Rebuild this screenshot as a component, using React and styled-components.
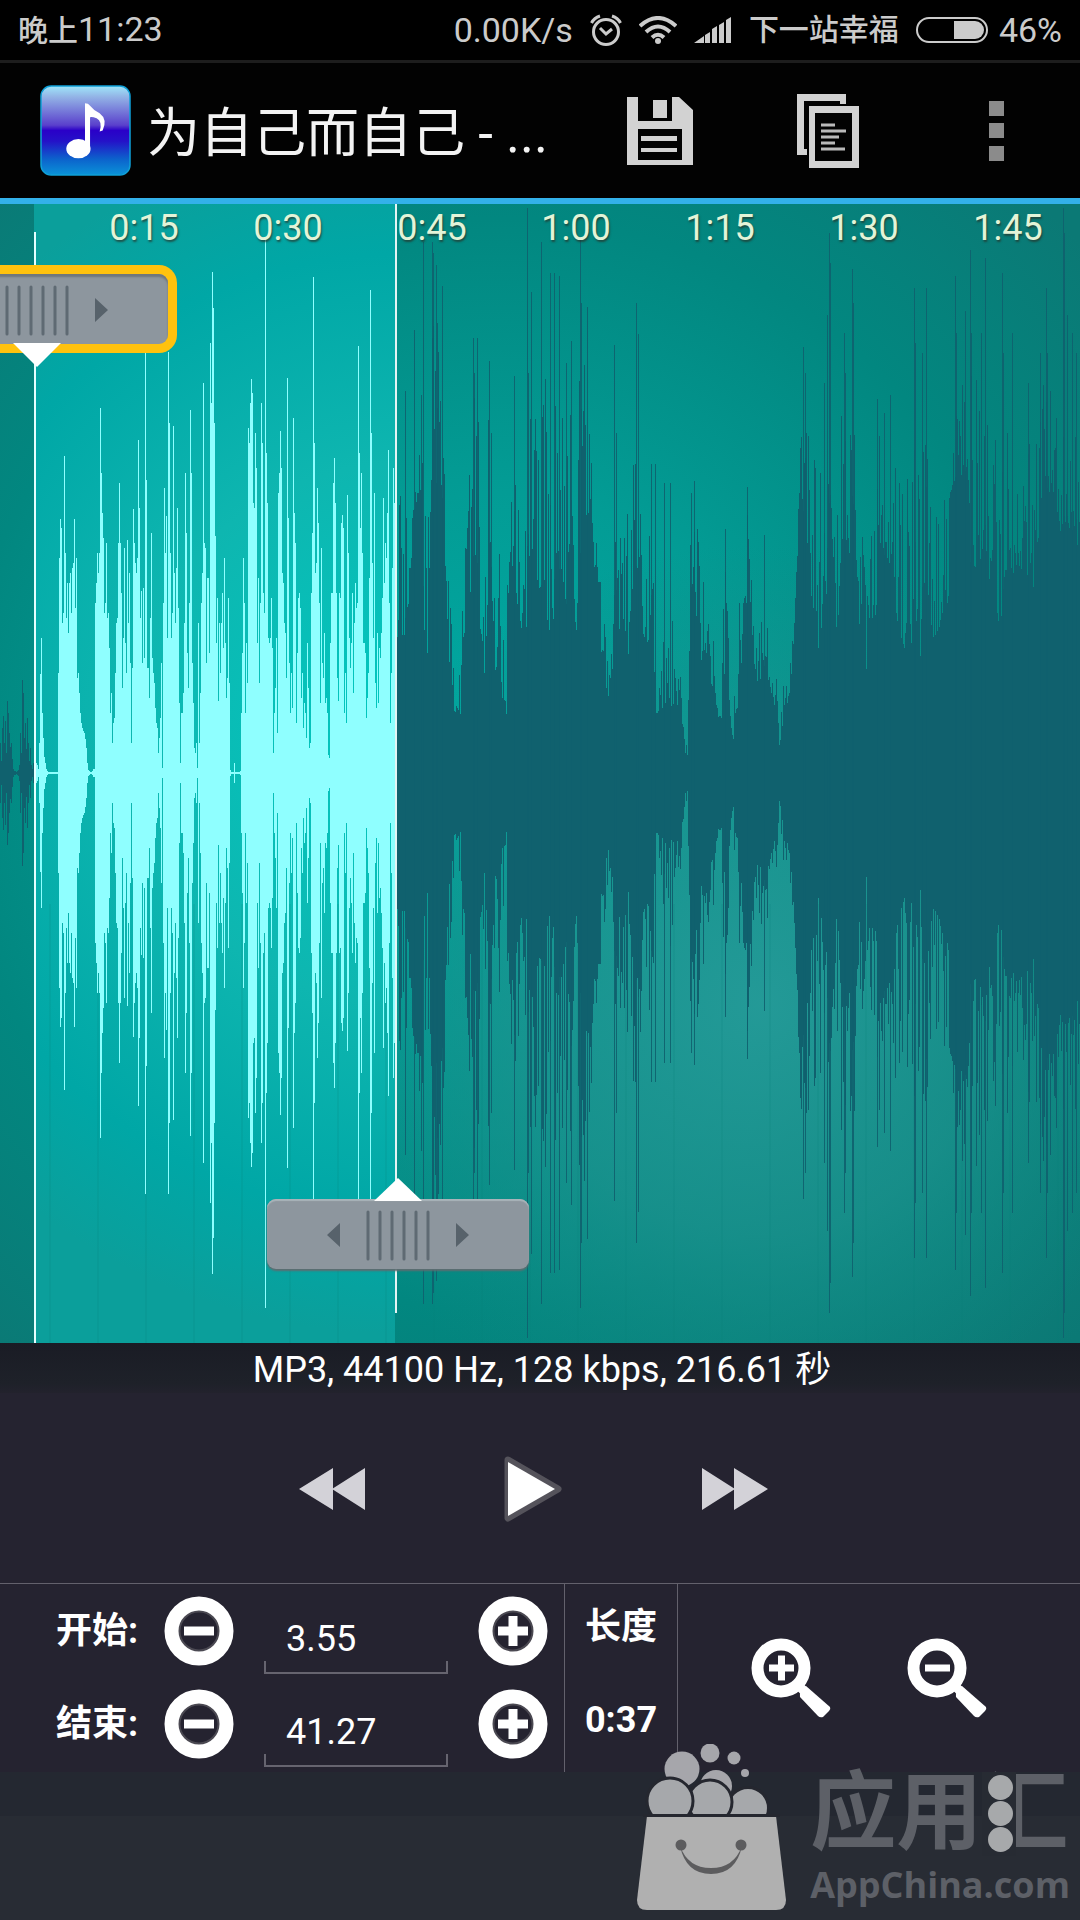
import React, { useState } from "react";
import styled, { createGlobalStyle } from "styled-components";

const GlobalStyle = createGlobalStyle`
  *, *::before, *::after { box-sizing: border-box; }
  body {
    margin: 0;
    background: #282c33;
    color: #fff;
    font-family: Roboto, "Noto Sans CJK SC", sans-serif;
  }
`;

const Screen = styled.div`
  position: relative;
  display: flex;
  flex-direction: column;
  min-height: 100vh;
  overflow: hidden;
`;

/* ---------- Status bar ---------- */

const StatusBar = styled.div`
  display: flex;
  align-items: center;
  justify-content: space-between;
  height: 63px;
  padding: 0 18px;
  background: #000;
  border-bottom: 3px solid #1d1d1d;
  color: #cbcbcb;
  font-size: 34px;
  line-height: 40px;
  white-space: nowrap;
`;

const StatusGroup = styled.div`
  display: flex;
  align-items: center;
  gap: ${(p) => p.$gap}px;
`;

const StatusCjk = styled.span`
  font-size: 30px;
  font-weight: 500;
`;

/* ---------- Title bar ---------- */

const TitleBar = styled.header`
  display: flex;
  align-items: center;
  height: 141px;
  padding: 0 43px 0 40px;
  background: #020202;
  border-bottom: 6px solid #33b1ea;
`;

const Title = styled.h1`
  flex: 1;
  margin: 0 0 0 16px;
  padding-top: 6px;
  font-size: 53px;
  line-height: 64px;
  font-weight: 400;
  color: #f3f3f3;
  white-space: nowrap;
`;

const TitleActions = styled.div`
  display: flex;
  align-items: center;
  gap: 86px;
`;

const IconButton = styled.button`
  display: flex;
  align-items: center;
  justify-content: center;
  flex: none;
  width: ${(p) => p.$size}px;
  height: ${(p) => p.$size}px;
  padding: 0;
  border: 0;
  background: none;
  cursor: pointer;
`;

/* ---------- Waveform ---------- */

const Stage = styled.main`
  position: relative;
  flex: 1;
  min-height: 600px;
  overflow: hidden;
  background: #008a84;
`;

const WaveSvg = styled.svg`
  position: absolute;
  inset: 0;
  width: 100%;
  height: 100%;
  display: block;
`;

const Ruler = styled.div`
  position: relative;
  display: flex;
  padding: 2px 0 0 72px;
  font-size: 36px;
  line-height: 44px;
  color: #e3f4d8;
  text-shadow: 1px 2px 2px rgba(40, 50, 40, 0.7);
`;

const Tick = styled.span`
  flex: 0 0 144px;
  text-align: center;
`;

const Handle = styled.button`
  position: absolute;
  left: ${(p) => p.$at}px;
  ${(p) => (p.$end ? "bottom: 74px;" : "top: 70px;")}
  width: 262px;
  height: 70px;
  margin-left: -131px;
  padding: 0;
  border: 0;
  border-radius: 9px;
  background: #8d969e;
  box-shadow: ${(p) =>
    p.$active
      ? "0 0 0 9px #ffc20e, inset 0 3px 2px #6f767c"
      : "inset 0 2px 1px #a9b4ba, 0 2px 2px #5f6c70"};
  cursor: pointer;
`;

const HandleSvg = styled.svg`
  display: block;
  overflow: visible;
`;

const InfoBar = styled.p`
  margin: 0;
  height: 50px;
  padding-left: 4px;
  background: linear-gradient(#1a1c25, #1e2129 80%, #23222d);
  font-size: 36px;
  line-height: 54px;
  text-align: center;
`;

/* ---------- Playback and range controls ---------- */

const Transport = styled.div`
  display: flex;
  align-items: center;
  justify-content: center;
  gap: 134px;
  height: 191px;
  padding: 2px 14px 0 0;
  background: #252330;
  border-bottom: 1px solid #63616c;
`;

const Controls = styled.div`
  display: grid;
  grid-template-columns: 565px 113px 1fr;
  height: 188px;
  background: #252330;
`;

const Panel = styled.div`
  display: flex;
  flex-direction: column;
  border-right: 1px solid #63616c;
`;

const RangeRow = styled.div`
  display: flex;
  align-items: center;
  gap: 30px;
  height: 93px;
  padding-left: 56px;
`;

const FieldLabel = styled.label`
  width: 78px;
  font-size: 36px;
  line-height: 44px;
  font-weight: 700;
  white-space: nowrap;
`;

const TimeInput = styled.input`
  align-self: flex-end;
  width: 184px;
  height: 72px;
  margin-bottom: 3px;
  padding: 2px 22px 0;
  border: 0;
  outline: 0;
  color: #fff;
  font: 400 36px/44px Roboto, sans-serif;
  background:
    linear-gradient(#66646f, #66646f) left bottom / 2px 13px no-repeat,
    linear-gradient(#66646f, #66646f) right bottom / 2px 13px no-repeat,
    linear-gradient(#66646f, #66646f) left bottom / 100% 2px no-repeat;
`;

const LengthCell = styled.div`
  display: flex;
  align-items: center;
  justify-content: center;
  height: 93px;
  padding-bottom: 8px;
  font-size: 36px;
  line-height: 44px;
  font-weight: 700;
`;

const ZoomPanel = styled.div`
  display: flex;
  align-items: center;
  justify-content: center;
  gap: 76px;
  padding-right: 20px;
`;

/* ---------- Footer ---------- */

const Footer = styled.footer`
  height: 148px;
  background: linear-gradient(#242831 44px, #282c34 44px);
`;

const Watermark = styled.div`
  position: absolute;
  right: 10px;
  bottom: 10px;
  display: flex;
  align-items: flex-end;
  gap: 24px;
`;

const Brand = styled.div`
  display: flex;
  flex-direction: column;
  align-items: flex-start;
  gap: 4px;
  padding-bottom: 4px;
  color: #5d6067;
`;

const BrandName = styled.span`
  position: relative;
  font: 700 86px/92px Roboto, "Noto Sans CJK SC", sans-serif;
  white-space: nowrap;
`;

const BrandDots = styled.span`
  position: absolute;
  right: 52px;
  top: 4px;
  display: flex;
  flex-direction: column;
  gap: 1px;
  width: 34px;
  padding: 3px 2px 4px 6px;
  background: #272b33;
`;

const BrandDot = styled.i`
  width: 25px;
  height: 25px;
  border-radius: 50%;
  background: #a7a9ab;
`;

const BrandSite = styled.span`
  font: 700 36px/42px "Open Sans", sans-serif;
`;

/* ---------- Waveform data ---------- */

const WIDTH = 1080;
const HEIGHT = 1139;
const MID = 569;
const SEL_START = 34;
const SEL_END = 395;

// Peak of every column inside the selection.
const SELECTED = [
  12, 20, 10, 8, 4, 30, 99, 135, 60, 35, 16, 10, 4, 2, 1, 1, 1, 1, 1, 1, 1, 1, 1, 1, 100, 215, 254, 245, 150, 160,
  317, 220, 155, 190, 140, 190, 200, 160, 205, 210, 254, 165, 215, 95, 100, 80, 60, 50, 45, 42, 40, 34, 25, 10, 3, 2, 1, 1, 2, 4,
  4, 170, 190, 220, 200, 220, 365, 300, 260, 235, 160, 170, 230, 155, 160, 125, 60, 80, 30, 50, 55, 100, 150, 155, 230, 290, 230, 180, 85, 135,
  225, 130, 100, 233, 150, 200, 110, 30, 105, 264, 230, 210, 200, 215, 333, 265, 155, 182, 110, 185, 115, 421, 293, 105, 105, 75, 155, 240, 115, 100,
  90, 65, 50, 45, 20, 35, 55, 110, 5, 170, 285, 220, 257, 135, 421, 350, 220, 135, 160, 347, 200, 150, 205, 265, 165, 70, 10, 60, 60, 80,
  150, 300, 240, 120, 85, 170, 363, 300, 110, 70, 25, 20, 30, 5, 150, 30, 80, 170, 200, 390, 230, 225, 110, 195, 195, 120, 430, 370, 501, 465,
  350, 237, 130, 175, 72, 150, 100, 150, 180, 125, 215, 130, 75, 95, 175, 90, 3, 1, 1, 1, 10, 1, 1, 1, 1, 1, 2, 60, 120, 215,
  170, 60, 130, 90, 345, 330, 370, 394, 380, 270, 265, 340, 305, 130, 195, 90, 170, 370, 330, 180, 160, 535, 320, 270, 135, 130, 135, 175, 125, 20,
  60, 85, 135, 40, 280, 300, 342, 305, 200, 190, 150, 140, 95, 395, 255, 110, 60, 100, 65, 355, 260, 230, 50, 120, 175, 180, 165, 75, 100, 45,
  70, 60, 35, 130, 85, 25, 30, 180, 240, 496, 330, 200, 210, 285, 250, 170, 70, 225, 110, 95, 140, 70, 75, 60, 18, 15, 130, 180, 180, 290,
  315, 270, 180, 95, 72, 180, 175, 250, 258, 245, 60, 100, 50, 278, 220, 135, 105, 130, 180, 80, 150, 190, 165, 170, 427, 320, 245, 300, 220, 130,
  130, 120, 55, 75, 100, 195, 483, 340, 210, 135, 280, 90, 65, 140, 70, 125, 115, 140, 175, 275, 190, 230, 215, 260, 323, 170, 50, 100, 205, 305, 270,
];

const LEAD = [
  30, 12, 45, 57, 30, 52, 20, 72, 60, 40, 26, 30, 14, 4, 2, 2, 1, 2, 3, 8, 40, 20, 93, 80, 35, 50, 24, 55, 30, 12, 25, 8, 4, 10,
];

// [x, quiet level, loud level] after the selection.
const TAIL = [
  [395, 110, 250], [404, 110, 300], [411, 190, 380], [415, 270, 350], [421, 270, 350], [424, 120, 290], [429, 110, 250],
  [432, 290, 480], [440, 290, 430], [444, 230, 300], [450, 75, 220], [456, 55, 120], [462, 55, 180], [465, 180, 260],
  [470, 180, 400], [477, 190, 420], [480, 140, 250], [485, 80, 220], [489, 220, 400], [494, 110, 240], [500, 55, 240],
  [507, 55, 260], [512, 180, 330], [520, 150, 270], [525, 120, 270], [530, 205, 360], [540, 150, 400], [550, 130, 400],
  [556, 130, 400], [562, 200, 380], [570, 90, 380], [576, 120, 350], [582, 240, 440], [590, 260, 400], [594, 190, 320],
  [599, 120, 200], [606, 85, 140], [611, 60, 120], [614, 170, 230], [620, 130, 280], [628, 110, 300], [634, 210, 320],
  [640, 190, 290], [645, 95, 180], [651, 160, 270], [656, 55, 200], [662, 45, 200], [668, 65, 210], [675, 65, 130],
  [682, 45, 100], [685, 15, 40], [687, 15, 60], [690, 160, 250], [694, 170, 280], [700, 110, 210], [708, 110, 180],
  [714, 65, 140], [720, 35, 150], [724, 70, 220], [730, 50, 160], [733, 30, 60], [740, 90, 190], [745, 170, 250],
  [749, 170, 270], [752, 120, 190], [758, 75, 150], [763, 110, 220], [768, 90, 150], [772, 75, 120], [776, 60, 110],
  [779, 25, 60], [784, 60, 100], [790, 75, 130], [796, 180, 240], [800, 280, 350], [806, 230, 350], [812, 160, 330],
  [818, 120, 310], [826, 170, 340], [830, 270, 420], [836, 130, 310], [843, 220, 390], [848, 200, 350], [854, 260, 350],
  [860, 120, 260], [868, 75, 250], [874, 150, 320], [882, 200, 350], [890, 210, 350], [898, 140, 290], [906, 120, 300],
  [914, 130, 360], [920, 110, 330], [926, 190, 340], [932, 95, 290], [940, 150, 290], [948, 160, 290], [953, 270, 360],
  [957, 320, 430], [962, 250, 400], [970, 210, 400], [980, 200, 410], [990, 190, 380], [998, 120, 350], [1004, 180, 380],
  [1012, 200, 350], [1020, 200, 320], [1028, 190, 330], [1035, 170, 350], [1042, 290, 400], [1050, 270, 390],
  [1060, 240, 370], [1066, 250, 440], [1072, 220, 400], [1081, 220, 380],
];

// Single loud columns: [x, peak].
const SPIKES = [
  [405, 382], [414, 443], [421, 378], [423, 531], [432, 531], [433, 520], [436, 508], [437, 450], [442, 487], [473, 435],
  [474, 400], [477, 435], [489, 412], [491, 340], [514, 397], [527, 565], [528, 400], [531, 481], [541, 531], [550, 500],
  [554, 500], [559, 497], [566, 410], [571, 432], [580, 535], [581, 470], [587, 466], [614, 428], [616, 340], [636, 470],
  [638, 439], [651, 309], [655, 309], [664, 290], [670, 290], [691, 280], [694, 292], [725, 244], [747, 286], [764, 238],
  [803, 426], [805, 400], [824, 390], [827, 458], [829, 540], [830, 510], [844, 440], [845, 400], [852, 504], [853, 470],
  [877, 374], [884, 360], [890, 378], [914, 485], [915, 430], [922, 420], [926, 485], [955, 497], [956, 440], [965, 462],
  [970, 523], [971, 440], [981, 440], [985, 515], [1002, 500], [1003, 420], [1012, 440], [1028, 390], [1040, 420],
  [1046, 485], [1047, 420], [1063, 565], [1064, 540], [1067, 458], [1072, 440], [1076, 420],
];

function tailPeaks() {
  const peaks = [];
  let seed = 77;
  let i = 0;
  const random = () => {
    seed = (seed * 16807) % 2147483647;
    return seed / 2147483647;
  };
  for (let x = SEL_END; x < WIDTH; x += 1) {
    while (i < TAIL.length - 2 && x >= TAIL[i + 1][0]) i += 1;
    const [x0, lo0, hi0] = TAIL[i];
    const [x1, lo1, hi1] = TAIL[i + 1];
    const t = (x - x0) / (x1 - x0);
    const r = random() < 0.3 ? random() * 0.2 : random();
    const lo = lo0 + (lo1 - lo0) * t;
    const hi = hi0 + (hi1 - hi0) * t;
    peaks.push(Math.round(lo + (hi - lo) * r));
  }
  return peaks;
}

const column = (x, peak) => `M${x + 0.5} ${MID - peak}V${MID + peak}`;
const toPath = (peaks, from) => peaks.map((p, i) => column(from + i, p)).join("");

const LEAD_PATH = toPath(LEAD, 0);
const SELECTED_PATH = toPath(SELECTED, SEL_START);
const TAIL_PATH = toPath(tailPeaks(), SEL_END);
const SPIKE_PATH = SPIKES.map(([x, p]) => column(x, p)).join("");
const GRID_PATH = Array.from({ length: 22 }, (_, i) => `M${50 + i * 48} 700V${HEIGHT}`).join("");

function Waveform() {
  return (
    <WaveSvg viewBox={`0 0 ${WIDTH} ${HEIGHT}`} preserveAspectRatio="none" aria-hidden="true">
      <defs>
        <radialGradient id="base" gradientUnits="userSpaceOnUse" cx="500" cy="560" r="780">
          <stop offset="0" stopColor="#00aaa3" />
          <stop offset="0.35" stopColor="#039c95" />
          <stop offset="0.7" stopColor="#028780" />
          <stop offset="1" stopColor="#0b7975" />
        </radialGradient>
        <radialGradient id="glow" gradientUnits="userSpaceOnUse" cx="760" cy="800" r="460">
          <stop offset="0" stopColor="#279a98" stopOpacity="0.9" />
          <stop offset="0.5" stopColor="#1f918d" stopOpacity="0.7" />
          <stop offset="1" stopColor="#148780" stopOpacity="0" />
        </radialGradient>
        <radialGradient id="selected" gradientUnits="userSpaceOnUse" cx="400" cy="530" r="600">
          <stop offset="0" stopColor="#00c8c0" />
          <stop offset="0.45" stopColor="#0eb6b0" />
          <stop offset="0.8" stopColor="#00a7a6" />
          <stop offset="1" stopColor="#0b9f9b" />
        </radialGradient>
      </defs>
      <rect width={WIDTH} height={HEIGHT} fill="url(#base)" />
      <rect width={WIDTH} height={HEIGHT} fill="url(#glow)" />
      <rect x={SEL_START} width={SEL_END - SEL_START} height={HEIGHT} fill="url(#selected)" />
      <path d={GRID_PATH} stroke="#0a7f7a" strokeOpacity="0.14" strokeWidth="2" />
      <path d={LEAD_PATH} stroke="#10616e" />
      <path d={TAIL_PATH} stroke="#10616e" />
      <path d={SPIKE_PATH} stroke="#10616e" strokeOpacity="0.9" />
      <path d={SELECTED_PATH} stroke="#8fffff" />
      <rect x="34" y="28" width="2" height={HEIGHT - 28} fill="#e4ffff" />
      <rect x="395" y="0" width="2" height="1109" fill="#e4f4f4" />
    </WaveSvg>
  );
}

function Grip({ end }) {
  return (
    <HandleSvg width="262" height="70" viewBox="0 0 262 70">
      <path d="M73 24V48L60 36ZM189 24V48L202 36Z" fill="#57626b" />
      <path d="M101 13V60M113 13V60M125 13V60M137 13V60M149 13V60M161 13V60" stroke="#5f6a73" strokeWidth="3" strokeLinecap="round" />
      <path d={end ? "M107 2L131 -21L155 2Z" : "M107 69H155L131 93Z"} fill="#fff" />
    </HandleSvg>
  );
}

/* ---------- Icons ---------- */

const AlarmIcon = () => (
  <svg width="32" height="32" viewBox="0 0 32 32" fill="none" stroke="#cbcbcb" strokeWidth="3">
    <circle cx="16" cy="18" r="12.5" />
    <path d="M10 14L16 20L22 15M1.500 9Q4 4 10 2M30.500 9Q28 4 22 2" />
  </svg>
);

const WifiIcon = () => (
  <svg width="38" height="28" viewBox="0 0 38 28" fill="none" stroke="#cbcbcb" strokeWidth="4">
    <path d="M1 10Q19 -6 37 10M7 16Q19 5 31 16M13 21.500Q19 16 25 21.500" />
    <circle cx="19" cy="25" r="3" fill="#cbcbcb" stroke="none" />
  </svg>
);

const SignalIcon = () => (
  <svg width="38" height="26" viewBox="0 0 38 26" fill="#cbcbcb">
    <path d="M0 26L10 19V26ZM11 18L16 15V26H11ZM18 12L23 9V26H18ZM25 8L30 5V26H25ZM32 3L37 0V26H32Z" />
  </svg>
);

const BatteryIcon = () => (
  <svg width="72" height="26" viewBox="0 0 72 26">
    <rect x="1" y="1" width="70" height="24" rx="12" fill="none" stroke="#cbcbcb" strokeWidth="2" />
    <path d="M38 4H59A9 9 0 0 1 59 22H38Z" fill="#cbcbcb" />
  </svg>
);

const AppIcon = () => (
  <svg width="91" height="91" viewBox="0 0 90 90" role="img" aria-label="Ringtone">
    <defs>
      <linearGradient id="app" x2="0" y2="1">
        <stop offset="0" stopColor="#9fe6fa" />
        <stop offset="0.12" stopColor="#93b4e6" />
        <stop offset="0.44" stopColor="#5a40cc" />
        <stop offset="0.5" stopColor="#2a00c8" />
        <stop offset="0.62" stopColor="#2412c8" />
        <stop offset="0.82" stopColor="#0c62cc" />
        <stop offset="1" stopColor="#0a93d8" />
      </linearGradient>
    </defs>
    <rect x="1" y="1" width="88" height="88" rx="10" fill="url(#app)" stroke="#0fa0d8" strokeWidth="1.500" />
    <ellipse cx="38" cy="63" rx="12" ry="9.500" fill="#fff" />
    <path d="M44.500 63V18Q48 18 49 20Q53 25 59 28Q67 34 62 45L59 46Q62 36 56 33Q51 31 49.500 32V63Z" fill="#fff" />
  </svg>
);

const SaveIcon = () => (
  <svg width="66" height="68" viewBox="0 0 66 68">
    <path fillRule="evenodd" fill="#d2d2d2" d="M0 0H11V24H45V0H52L66 13V68H0ZM11 32V63H55V32Z" />
    <path fill="#d2d2d2" d="M26 3H40V21H26ZM14 39H50V44H14ZM14 51H50V55H14Z" />
  </svg>
);

const CopyIcon = () => (
  <svg width="62" height="74" viewBox="0 0 62 74">
    <path fill="#d2d2d2" d="M0 0H49V10H43V7H7V55H10V61H0Z" />
    <path fillRule="evenodd" fill="#d2d2d2" d="M12 12H62V74H12ZM18 19V67H55V19Z" />
    <path d="M24 31H38M24 37H49M24 43H42M24 49H38M24 55H48" stroke="#b9b9b9" strokeWidth="3" />
  </svg>
);

const MoreIcon = () => (
  <svg width="15" height="60" viewBox="0 0 15 60" fill="#8b8b8b">
    <path d="M0 0H15V15H0ZM0 22H15V37H0ZM0 45H15V60H0Z" />
  </svg>
);

const SkipIcon = ({ forward }) => (
  <svg width="67" height="42" viewBox="0 0 67 42" fill="#d3d2d8">
    <path d={forward ? "M1 0L34 21L1 42ZM33 0L67 21L33 42Z" : "M66 0L33 21L66 42ZM34 0L0 21L34 42Z"} />
  </svg>
);

const PlayIcon = () => (
  <svg width="58" height="66" viewBox="0 0 58 66">
    <path d="M4 4L54 33L4 62Z" fill="#fff" stroke="#55535b" strokeWidth="7" strokeLinejoin="round" />
    <path d="M4 6L51 33L4 60Z" fill="#fff" />
  </svg>
);

const StepIcon = ({ plus }) => (
  <svg width="70" height="70" viewBox="0 0 70 70" fill="none" stroke="#fff">
    <circle cx="35" cy="35" r="20" stroke="#4b4952" strokeWidth="3" />
    <circle cx="35" cy="35" r="27.500" strokeWidth="14" />
    <path d={plus ? "M20 35H50M35 20V50" : "M20 35H50"} strokeWidth="9" />
  </svg>
);

const ZoomIcon = ({ plus }) => (
  <svg width="80" height="80" viewBox="0 0 80 80" fill="none" stroke="#fff">
    <circle cx="30" cy="30" r="23.500" strokeWidth="12" />
    <path d={plus ? "M18 30H43M30.500 17.500V42.500" : "M18 30H43"} strokeWidth="7" />
    <path d="M46 46L56 56" strokeWidth="9" />
    <path d="M55 48L79 69Q80 71 78 73L72 79Q69 80 67 78L49 59Q48 52 55 48Z" fill="#fff" stroke="none" />
  </svg>
);

const BagIcon = () => (
  <svg width="149" height="166" viewBox="0 0 149 166">
    <g fill="#a6a6ab">
      <circle cx="73" cy="9" r="9.500" />
      <circle cx="97" cy="14" r="6.500" />
      <circle cx="108" cy="29" r="4" />
      <circle cx="45" cy="25" r="17.500" />
      <circle cx="79" cy="42" r="16" />
    </g>
    <g fill="#a6a8ab" stroke="#25272f" strokeWidth="3">
      <circle cx="111" cy="64" r="20.500" />
      <circle cx="73" cy="58" r="22" />
      <circle cx="33" cy="57" r="23" />
    </g>
    <path d="M10 72H139L149 156Q149 166 139 166H10Q0 166 0 156Z" fill="#b0b0b0" />
    <path d="M6 71.500H143" stroke="#25272f" strokeWidth="3" />
    <g fill="#5c5c5e">
      <circle cx="44" cy="101" r="5.500" />
      <circle cx="104" cy="101" r="5.500" />
      <path d="M43 102Q51 124 74 124Q97 124 105 102Q99 130 74 130Q49 130 43 102Z" />
    </g>
  </svg>
);

/* ---------- App ---------- */

const TICKS = ["0:15", "0:30", "0:45", "1:00", "1:15", "1:30", "1:45"];

function RangeField({ id, label, value, onChange }) {
  const step = (delta) => onChange((Number(value) + delta).toFixed(2));
  return (
    <RangeRow>
      <FieldLabel htmlFor={id}>{label}</FieldLabel>
      <IconButton $size={70} aria-label={`${label} −`} onClick={() => step(-0.1)}>
        <StepIcon />
      </IconButton>
      <TimeInput id={id} value={value} onChange={(e) => onChange(e.target.value)} />
      <IconButton $size={70} aria-label={`${label} +`} onClick={() => step(0.1)}>
        <StepIcon plus />
      </IconButton>
    </RangeRow>
  );
}

export default function App() {
  const [start, setStart] = useState("3.55");
  const [end, setEnd] = useState("41.27");

  return (
    <Screen>
      <GlobalStyle />
      <StatusBar>
        <span><StatusCjk>晚上</StatusCjk>11:23</span>
        <StatusGroup $gap={17}>
          <span>0.00K/s</span>
          <AlarmIcon />
          <WifiIcon />
          <SignalIcon />
          <StatusCjk>下一站幸福</StatusCjk>
          <StatusGroup $gap={11}>
            <BatteryIcon />
            <span>46%</span>
          </StatusGroup>
        </StatusGroup>
      </StatusBar>

      <TitleBar>
        <AppIcon />
        <Title>为自己而自己 - ...</Title>
        <TitleActions>
          <IconButton $size={82} aria-label="保存"><SaveIcon /></IconButton>
          <IconButton $size={82} aria-label="复制"><CopyIcon /></IconButton>
          <IconButton $size={82} aria-label="更多"><MoreIcon /></IconButton>
        </TitleActions>
      </TitleBar>

      <Stage>
        <Waveform />
        <Ruler>{TICKS.map((t) => <Tick key={t}>{t}</Tick>)}</Ruler>
        <Handle $at={37} $active aria-label="开始"><Grip /></Handle>
        <Handle $at={398} $end aria-label="结束"><Grip end /></Handle>
      </Stage>

      <InfoBar>MP3, 44100 Hz, 128 kbps, 216.61 秒</InfoBar>

      <Transport>
        <IconButton $size={67} aria-label="后退"><SkipIcon /></IconButton>
        <IconButton $size={67} aria-label="播放"><PlayIcon /></IconButton>
        <IconButton $size={67} aria-label="前进"><SkipIcon forward /></IconButton>
      </Transport>

      <Controls>
        <Panel>
          <RangeField id="start" label="开始:" value={start} onChange={setStart} />
          <RangeField id="end" label="结束:" value={end} onChange={setEnd} />
        </Panel>
        <Panel>
          <LengthCell>长度</LengthCell>
          <LengthCell>0:37</LengthCell>
        </Panel>
        <ZoomPanel>
          <IconButton $size={80} aria-label="放大"><ZoomIcon plus /></IconButton>
          <IconButton $size={80} aria-label="缩小"><ZoomIcon /></IconButton>
        </ZoomPanel>
      </Controls>

      <Footer />
      <Watermark>
        <BagIcon />
        <Brand>
          <BrandName>
            应用汇
            <BrandDots><BrandDot /><BrandDot /><BrandDot /></BrandDots>
          </BrandName>
          <BrandSite>AppChina.com</BrandSite>
        </Brand>
      </Watermark>
    </Screen>
  );
}
